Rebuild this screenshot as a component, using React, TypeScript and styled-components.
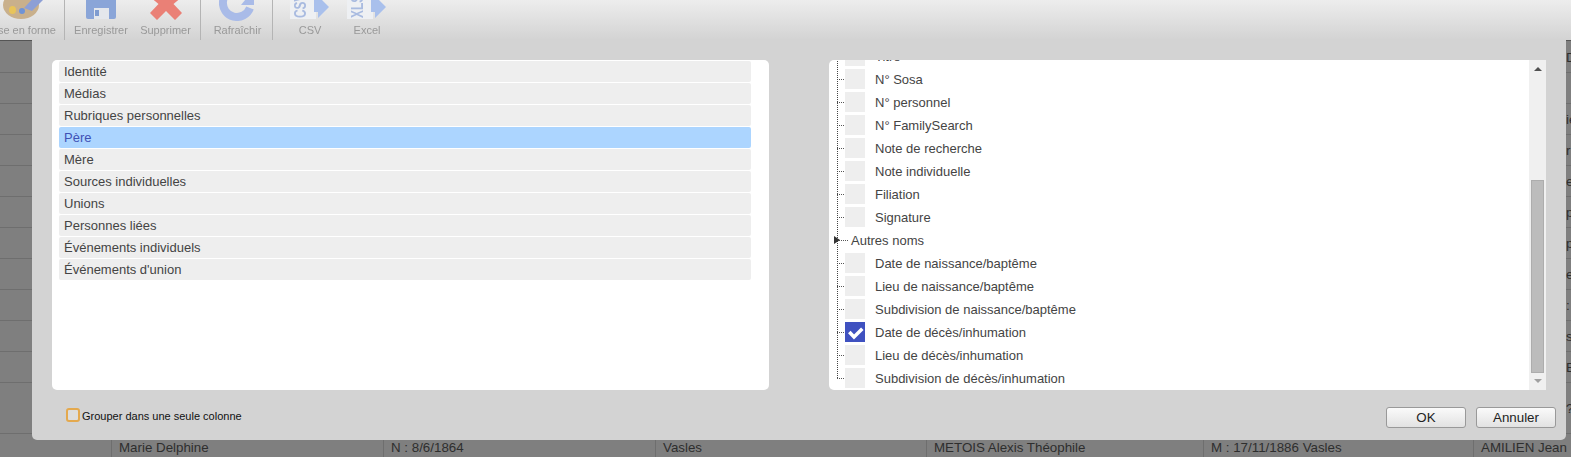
import { createGlobalStyle, styled } from "styled-components";

const GlobalStyle = createGlobalStyle`
  html, body {
    margin: 0;
    padding: 0;
    background: #7f7f7f;
    overflow: hidden;
  }
  body {
    font-family: "Liberation Sans", Arial, sans-serif;
  }
`;

const TABS = [
  "Identité",
  "Médias",
  "Rubriques personnelles",
  "Père",
  "Mère",
  "Sources individuelles",
  "Unions",
  "Personnes liées",
  "Événements individuels",
  "Événements d'union",
];

const FIELDS = [
  { label: "Titre" },
  { label: "N° Sosa" },
  { label: "N° personnel" },
  { label: "N° FamilySearch" },
  { label: "Note de recherche" },
  { label: "Note individuelle" },
  { label: "Filiation" },
  { label: "Signature" },
  { label: "Autres noms", group: true },
  { label: "Date de naissance/baptême" },
  { label: "Lieu de naissance/baptême" },
  { label: "Subdivision de naissance/baptême" },
  { label: "Date de décès/inhumation", checked: true },
  { label: "Lieu de décès/inhumation" },
  { label: "Subdivision de décès/inhumation" },
];

// what is left visible of the last column, right of the dialog
const EDGE_ROWS = [
  { edge: "D", height: 31 },
  { edge: "", height: 31 },
  { edge: "ie", height: 31 },
  { edge: "r", height: 31 },
  { edge: "e", height: 31 },
  { edge: "p", height: 31 },
  { edge: "p", height: 31 },
  { edge: "e", height: 31 },
  { edge: ":", height: 31 },
  { edge: "s", height: 31 },
  { edge: "E", height: 31 },
  { edge: "?", height: 51 },
];

const Palette = () => (
  <svg width="48" height="48" viewBox="0 0 48 48">
    <ellipse cx="21" cy="32" rx="18" ry="14" fill="#c9b08c" />
    <ellipse cx="12.5" cy="37" rx="3.5" ry="4" fill="#e8c45a" />
    <circle cx="22" cy="38" r="3" fill="#6f93d6" />
    <path d="M24 35 L40 18 L46 24 L32 38 Z" fill="#8d9fd6" />
  </svg>
);

const Floppy = () => (
  <svg width="36" height="48" viewBox="0 0 36 48">
    <path d="M3 4h30v40a2 2 0 0 1-2 2H5a2 2 0 0 1-2-2z" fill="#8aa5d8" />
    <path d="M11 35h15v11H11z" fill="#e4e7ec" />
    <path d="M12 37h4v6h-4z" fill="#7f9cd0" />
  </svg>
);

const Cross = () => (
  <svg width="36" height="48" viewBox="0 0 36 48">
    <path
      d="M18 24 L27 15 L35 23 L25.5 31 L34 40 L27 47 L18 38 L9 47 L2 40 L10.5 31 L1 23 L9 15 Z"
      fill="#ea8076"
    />
  </svg>
);

const Refresh = () => (
  <svg width="38" height="48" viewBox="0 0 38 48">
    <path
      d="M18 16 A14 14 0 1 0 31 35"
      fill="none"
      stroke="#a9bbe8"
      strokeWidth="8"
    />
    <path d="M35 16 V32 H22 Z" fill="#a9bbe8" />
  </svg>
);

const FileBadge = ({ text }: { text: string }) => (
  <svg width="40" height="48" viewBox="0 0 40 48">
    <path d="M0 0h26v46H0z" fill="#eef0f3" />
    <text
      transform="translate(16 45) rotate(-90) scale(0.85 1.2)"
      fontFamily="Liberation Sans"
      fontWeight="bold"
      fontSize="14"
      fill="#a9bbe0"
    >
      {text}
    </text>
    <path d="M24 0 H32 V27 L39 34 L28 45 V39 H24 Z" fill="#a9c0ec" />
  </svg>
);

const App = () => (
  <Page>
    <GlobalStyle />
    <Toolbar>
      <ToolButton $width={64} $clip $right={8}>
        <IconSlot $start>
          <Palette />
        </IconSlot>
        <ToolLabel>Mise en forme</ToolLabel>
      </ToolButton>
      <ToolSeparator />
      <ToolButton $width={72}>
        <IconSlot>
          <Floppy />
        </IconSlot>
        <ToolLabel>Enregistrer</ToolLabel>
      </ToolButton>
      <ToolButton $width={63} $right={6}>
        <IconSlot>
          <Cross />
        </IconSlot>
        <ToolLabel>Supprimer</ToolLabel>
      </ToolButton>
      <ToolSeparator />
      <ToolButton $width={71} $left={2}>
        <IconSlot>
          <Refresh />
        </IconSlot>
        <ToolLabel>Rafraîchir</ToolLabel>
      </ToolButton>
      <ToolSeparator />
      <ToolButton $width={72} $left={2}>
        <IconSlot>
          <FileBadge text="CSV" />
        </IconSlot>
        <ToolLabel>CSV</ToolLabel>
      </ToolButton>
      <ToolButton $width={42} $left={2}>
        <IconSlot>
          <FileBadge text="XLS" />
        </IconSlot>
        <ToolLabel>Excel</ToolLabel>
      </ToolButton>
    </Toolbar>

    <Backdrop>
      {EDGE_ROWS.map((row, i) => (
        <BackdropRow key={i} $height={row.height}>
          <EdgeText>{row.edge}</EdgeText>
        </BackdropRow>
      ))}
      <LastRow>
        <Cell $width={272}>Marie Delphine</Cell>
        <Cell $width={272}>N : 8/6/1864</Cell>
        <Cell $width={271}>Vasles</Cell>
        <Cell $width={277}>METOIS Alexis Théophile</Cell>
        <Cell $width={270}>M : 17/11/1886 Vasles</Cell>
        <Cell $width={100}>AMILIEN Jean Baptiste</Cell>
      </LastRow>
    </Backdrop>

    <Dialog>
      <Panels>
        <TabsPanel>
          {TABS.map((tab) => (
            <TabRow key={tab} $active={tab === "Père"}>
              {tab}
            </TabRow>
          ))}
        </TabsPanel>
        <TreePanel>
          <TreeScroll>
            <TreeList>
              {FIELDS.map((field) =>
                field.group ? (
                  <GroupRow key={field.label}>
                    <GroupArrow />
                    <GroupDots />
                    {field.label}
                  </GroupRow>
                ) : (
                  <FieldRow key={field.label}>
                    <RowDots />
                    <CheckBox $checked={field.checked}>
                      {field.checked && (
                        <svg width="20" height="20" viewBox="0 0 20 20">
                          <path
                            d="M4.3 10 L9 15 L17.3 6.7"
                            fill="none"
                            stroke="#fff"
                            strokeWidth="3.5"
                          />
                        </svg>
                      )}
                    </CheckBox>
                    <FieldLabel>{field.label}</FieldLabel>
                  </FieldRow>
                ),
              )}
            </TreeList>
          </TreeScroll>
          <ScrollBar>
            <ScrollArrow $dir="up" />
            <ScrollThumb />
            <ScrollArrow $dir="down" />
          </ScrollBar>
        </TreePanel>
      </Panels>
      <Footer>
        <GroupOption>
          <OrangeCheck />
          <GroupLabel>Grouper dans une seule colonne</GroupLabel>
        </GroupOption>
        <Actions>
          <ActionButton>OK</ActionButton>
          <ActionButton>Annuler</ActionButton>
        </Actions>
      </Footer>
    </Dialog>
  </Page>
);

const Page = styled.div`
  position: relative;
  width: 1571px;
  height: 457px;
  overflow: hidden;
  background: #7f7f7f;
`;

const Toolbar = styled.div`
  height: 40px;
  display: flex;
  overflow: hidden;
  background: linear-gradient(#ededed, #d3d3d3);
`;

const ToolButton = styled.div<{
  $width: number;
  $clip?: boolean;
  $left?: number;
  $right?: number;
}>`
  width: ${(p) => p.$width}px;
  height: 40px;
  flex: none;
  display: flex;
  flex-direction: column;
  justify-content: flex-end;
  align-items: ${(p) => (p.$clip ? "flex-end" : "center")};
  box-sizing: border-box;
  padding: 0 ${(p) => p.$right ?? 0}px 3px ${(p) => p.$left ?? 0}px;
  filter: blur(0.3px);
`;

const IconSlot = styled.div<{ $start?: boolean }>`
  height: 48px;
  flex: none;
  display: flex;
  justify-content: center;
  align-self: ${(p) => (p.$start ? "flex-start" : "center")};
  margin-bottom: 3px;
`;

const ToolLabel = styled.span`
  font-size: 11px;
  line-height: 13px;
  color: #999;
  white-space: nowrap;
`;

const ToolSeparator = styled.div`
  width: 1px;
  flex: none;
  background: #b4b4b4;
`;

const Backdrop = styled.div`
  display: flex;
  flex-direction: column;
  border-top: 1px solid #555;
  padding-top: 1px;
`;

const BackdropRow = styled.div<{ $height: number }>`
  height: ${(p) => p.$height}px;
  flex: none;
  box-sizing: border-box;
  display: flex;
  align-items: center;
  justify-content: flex-end;
  border-bottom: 1px solid #6e6e6e;
`;

const EdgeText = styled.span`
  width: 5px;
  overflow: hidden;
  font-size: 13.33px;
  color: #2e2e2e;
`;

const LastRow = styled.div`
  display: flex;
  height: 24px;
  margin-left: 111px;
`;

const Cell = styled.div<{ $width: number }>`
  width: ${(p) => p.$width}px;
  flex: none;
  box-sizing: border-box;
  padding: 5px 0 0 7px;
  font-size: 13.33px;
  line-height: 18px;
  color: #2e2e2e;
  white-space: nowrap;
  border-left: 1px solid #6e6e6e;
  overflow: hidden;
`;

const Dialog = styled.div`
  position: absolute;
  left: 32px;
  top: 40px;
  width: 1534px;
  height: 400px;
  box-sizing: border-box;
  padding: 20px 20px 0;
  background: #d3d3d3;
  border-radius: 0 0 5px 5px;
  display: flex;
  flex-direction: column;
`;

const Panels = styled.div`
  display: flex;
  justify-content: space-between;
  height: 330px;
  flex: none;
`;

const TabsPanel = styled.div`
  width: 717px;
  box-sizing: border-box;
  padding: 1px 18px 0 7px;
  background: #fff;
  border-radius: 5px;
  display: flex;
  flex-direction: column;
  gap: 1px;
`;

const TabRow = styled.div<{ $active?: boolean }>`
  height: 21px;
  flex: none;
  padding-left: 5px;
  font-size: 13px;
  line-height: 21px;
  border-radius: 2px;
  color: ${(p) => (p.$active ? "#3f51b5" : "#444")};
  background: ${(p) => (p.$active ? "#acd5ff" : "#eee")};
`;

const TreePanel = styled.div`
  width: 717px;
  background: #fff;
  border-radius: 5px 0 0 5px;
  display: flex;
  overflow: hidden;
`;

const TreeScroll = styled.div`
  flex: 1;
  overflow: hidden;
  display: flex;
  flex-direction: column;
  justify-content: flex-end;
  padding-bottom: 2px;
`;

const TreeList = styled.div`
  position: relative;
  flex: none;
  padding-left: 8px;
  display: flex;
  flex-direction: column;
  gap: 3px;

  &::before {
    content: "";
    position: absolute;
    left: 8px;
    top: 0;
    bottom: 10px;
    border-left: 1px dotted #444;
  }
`;

const FieldRow = styled.div`
  display: flex;
  align-items: center;
  height: 20px;
  font-size: 13px;
  color: #444;
`;

const RowDots = styled.span`
  width: 8px;
  height: 1px;
  flex: none;
  background-image: linear-gradient(90deg, #555 50%, transparent 50%);
  background-size: 2px 1px;
`;

const CheckBox = styled.span<{ $checked?: boolean }>`
  width: 20px;
  height: 20px;
  flex: none;
  background: ${(p) => (p.$checked ? "#3f51c0" : "#eee")};
`;

const FieldLabel = styled.span`
  margin-left: 10px;
  white-space: nowrap;
`;

const GroupRow = styled.div`
  position: relative;
  display: flex;
  align-items: center;
  height: 20px;
  font-size: 13px;
  color: #444;
`;

const GroupArrow = styled.span`
  position: absolute;
  left: -3px;
  top: 6px;
  border-left: 6px solid #333;
  border-top: 4px solid transparent;
  border-bottom: 4px solid transparent;
`;

const GroupDots = styled(RowDots)`
  width: 12px;
  margin-right: 2px;
`;

const ScrollBar = styled.div`
  width: 17px;
  flex: none;
  background: #f0f0f0;
  display: flex;
  flex-direction: column;
  align-items: center;
  justify-content: flex-end;
  position: relative;
`;

const ScrollThumb = styled.div`
  width: 13px;
  height: 193px;
  box-sizing: border-box;
  background: #bcbcbc;
  border: 1px solid #adadad;
  margin-bottom: 17px;
`;

const ScrollArrow = styled.span<{ $dir: "up" | "down" }>`
  position: absolute;
  ${(p) => (p.$dir === "up" ? "top: 7px;" : "bottom: 7px;")}
  border-left: 4px solid transparent;
  border-right: 4px solid transparent;
  ${(p) =>
    p.$dir === "up"
      ? "border-bottom: 4px solid #505050;"
      : "border-top: 4px solid #a0a0a0;"}
`;

const Footer = styled.div`
  flex: 1;
  display: flex;
  justify-content: space-between;
  align-items: flex-start;
  padding: 17px 0 0 14px;
  margin-right: -10px;
`;

const GroupOption = styled.div`
  display: flex;
  align-items: center;
  gap: 2px;
  font-size: 11px;
  color: #111;
`;

const GroupLabel = styled.span`
  padding-top: 3px;
`;

const OrangeCheck = styled.span`
  width: 10px;
  height: 10px;
  background: #ddd;
  border: 2px solid #e4a94e;
  border-radius: 3px;
`;

const Actions = styled.div`
  display: flex;
  gap: 10px;
`;

const ActionButton = styled.button`
  width: 80px;
  height: 21px;
  padding: 0;
  font-family: inherit;
  font-size: 13.33px;
  color: #222;
  background: linear-gradient(#fafafa, #e2e2e2);
  border: 1px solid #999;
  border-radius: 3px;
`;

export default App;
